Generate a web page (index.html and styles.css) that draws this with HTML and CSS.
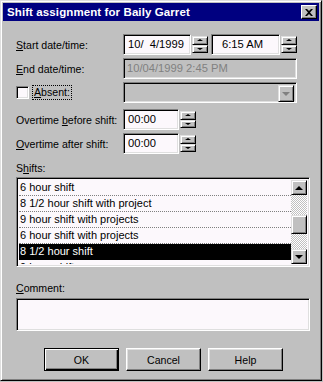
FILE: index.html
```html
<!DOCTYPE html>
<html>
<head>
<meta charset="utf-8">
<link rel="stylesheet" href="styles.css">
</head>
<body>
<div class="window">
  <div class="titlebar">
    <span class="title">Shift assignment for Baily Garret</span>
    <span class="closebtn"><svg width="8" height="7" viewBox="0 0 8 7"><path d="M0 0h2l2 2 2-2h2L5 3.5 8 7H6L4 5 2 7H0l3-3.5z" fill="#000"/></svg></span>
  </div>
  <div class="content">
    <div class="row r1">
      <span class="lbl"><u>S</u>tart date/time:</span>
      <div class="spinbox w-date">
        <div class="field">10/&nbsp;&nbsp;4/1999</div>
        <div class="spins"><span class="sb"><i class="up"></i></span><span class="sb"><i class="down"></i></span></div>
      </div>
      <div class="spinbox w-time">
        <div class="field ind">6:15 AM</div>
        <div class="spins"><span class="sb"><i class="up"></i></span><span class="sb"><i class="down"></i></span></div>
      </div>
    </div>
    <div class="row r2">
      <span class="lbl"><u>E</u>nd date/time:</span>
      <div class="field disabled w-full">10/04/1999 2:45 PM</div>
    </div>
    <div class="row r3">
      <span class="lbl chk"><span class="checkbox"></span><span class="focus"><u>A</u>bsent:</span></span>
      <div class="field disabled w-full combo"><span class="dropbtn"><i class="down gray"></i></span></div>
    </div>
    <div class="row r4">
      <span class="lbl">Overtime <u>b</u>efore shift:</span>
      <div class="spinbox w-ot">
        <div class="field">00:00</div>
        <div class="spins"><span class="sb"><i class="up"></i></span><span class="sb"><i class="down"></i></span></div>
      </div>
    </div>
    <div class="row r5">
      <span class="lbl"><u>O</u>vertime after shift:</span>
      <div class="spinbox w-ot">
        <div class="field">00:00</div>
        <div class="spins"><span class="sb"><i class="up"></i></span><span class="sb"><i class="down"></i></span></div>
      </div>
    </div>
    <div class="caption c-shifts">S<u>h</u>ifts:</div>
    <div class="listbox">
      <ul class="items">
        <li>6 hour shift</li>
        <li>8 1/2 hour shift with project</li>
        <li>9 hour shift with projects</li>
        <li>6 hour shift with projects</li>
        <li class="sel">8 1/2 hour shift</li>
        <li>9 hour shift</li>
      </ul>
      <div class="vscroll">
        <span class="sbtn"><i class="up big"></i></span>
        <span class="track t1"></span>
        <span class="thumb"></span>
        <span class="track t2"></span>
        <span class="sbtn"><i class="down big"></i></span>
      </div>
    </div>
    <div class="caption c-comment"><u>C</u>omment:</div>
    <div class="field comment"></div>
    <div class="buttons">
      <span class="btn default">OK</span>
      <span class="btn">Cancel</span>
      <span class="btn">Help</span>
    </div>
  </div>
</div>
</body>
</html>
```
FILE: styles.css
```css
* { box-sizing: border-box; }
html, body { margin: 0; padding: 0; background: #c0c0c0; }
body { width: 323px; height: 382px; overflow: hidden; font-family: "Liberation Sans", Arial, sans-serif; font-size: 10.6px; color: #000; }
u { text-decoration: underline; text-underline-offset: 1px; }

.window {
  width: 322px; height: 381px;
  background: #c0c0c0;
  border: 1px solid; border-color: #dfdfdf #000 #000 #dfdfdf;
  box-shadow: inset 1px 1px #fff, inset -1px -1px #808080;
  padding: 3px 3px 0 3px;
  position: relative;
}
.titlebar {
  height: 18px; background: #000080; color: #fff;
  display: flex; align-items: center; justify-content: space-between;
  padding: 0 2px 0 4px;
  margin: -1px 0 0 -1px;
  width: 316px;
}
.title { font-weight: bold; font-size: 11.5px; letter-spacing: 0.1px; }
.closebtn {
  width: 16px; height: 14px; background: #c0c0c0;
  border: 1px solid; border-color: #fff #000 #000 #fff;
  box-shadow: inset -1px -1px #808080;
  display: flex; align-items: center; justify-content: center;
}

.content { padding: 13px 0 0 12px; }
.row { display: flex; align-items: center; height: 21px; }
.r2 { margin-top: 3px; }
.r3 { margin-top: 3px; }
.r4 { margin-top: 6px; }
.r5 { margin-top: 3px; }
.lbl { width: 107px; flex: none; white-space: nowrap; }

.field {
  height: 21px; background: #fcf8fc;
  border: 1px solid; border-color: #808080 #fff #fff #808080;
  box-shadow: inset 1px 1px #000, inset -1px -1px #dfdfdf;
  padding: 3px 0 0 4px; white-space: nowrap;
  font-size: 11.2px;
}
.field.ind { padding-left: 10px; }
.field.disabled { background: #c0c0c0; color: #808080; padding-left: 3px; }
.w-full { width: 174px; }

.spinbox { display: flex; height: 21px; }
.spinbox .field { flex: 1; }
.w-date { width: 85px; }
.w-time { width: 86px; margin-left: 3px; }
.w-ot { width: 73px; }
.spins { width: 17px; display: flex; flex-direction: column; padding: 2px 0 2px 1px; gap: 0; }
.sb {
  flex: 1; background: #c0c0c0;
  border: 1px solid; border-color: #dfdfdf #000 #000 #dfdfdf;
  box-shadow: inset 1px 1px #fff, inset -1px -1px #808080;
  display: flex; align-items: center; justify-content: center;
}
i.up, i.down { display: block; width: 0; height: 0; border-left: 3px solid transparent; border-right: 3px solid transparent; }
i.up { border-bottom: 2px solid #000; }
i.down { border-top: 2px solid #000; }
i.big.up { border-left-width: 4px; border-right-width: 4px; border-bottom-width: 4px; }
i.big.down { border-left-width: 4px; border-right-width: 4px; border-top-width: 4px; }
i.gray.down { border-left-width: 4px; border-right-width: 4px; border-top: 4px solid #808080; }

.chk { display: flex; align-items: center; }
.checkbox {
  width: 13px; height: 13px; background: #fcf8fc;
  border: 1px solid; border-color: #808080 #fff #fff #808080;
  box-shadow: inset 1px 1px #000, inset -1px -1px #dfdfdf;
  margin-right: 4px;
}
.focus { outline: 1px dotted #000; outline-offset: 0; padding: 0 1px; line-height: 13px; }
.combo { display: flex; justify-content: flex-end; padding: 2px; }
.dropbtn {
  width: 16px; height: 17px; background: #c0c0c0;
  border: 1px solid; border-color: #dfdfdf #000 #000 #dfdfdf;
  box-shadow: inset 1px 1px #fff, inset -1px -1px #808080;
  display: flex; align-items: center; justify-content: center;
}

.caption { height: 13px; line-height: 13px; }
.c-shifts { margin-top: 8px; }
.listbox {
  margin-top: 2px; width: 294px; height: 90px; display: flex;
  border: 1px solid; border-color: #808080 #fff #fff #808080;
  box-shadow: inset 1px 1px #000, inset -1px -1px #dfdfdf;
  padding: 2px; background: #fcf8fc;
}
.items { list-style: none; margin: 0; padding: 0; flex: 1; overflow: hidden; font-size: 11px; }
.items li { height: 16px; line-height: 15px; padding-left: 1px; border-bottom: 1px dotted #808080; white-space: nowrap; }
.items li.sel { background: #000; color: #fff; border-bottom-color: #000; }
.vscroll { width: 16px; display: flex; flex-direction: column; }
.sbtn, .thumb {
  background: #c0c0c0; flex: none;
  border: 1px solid; border-color: #dfdfdf #000 #000 #dfdfdf;
  box-shadow: inset 1px 1px #fff, inset -1px -1px #808080;
  display: flex; align-items: center; justify-content: center;
}
.sbtn { height: 15px; }
.thumb { height: 19px; }
.track { flex: none; background-color: #c0c0c0; background-image: conic-gradient(#fff 25%, #c0c0c0 0 50%, #fff 0 75%, #c0c0c0 0); background-size: 2px 2px; }
.t1 { height: 20px; }
.t2 { flex: 1; }

.c-comment { margin-top: 15px; }
.comment { margin-top: 3px; width: 294px; height: 33px; }

.buttons { display: flex; gap: 7px; margin: 17px 0 0 28px; }
.btn {
  width: 75px; height: 23px; background: #c0c0c0;
  border: 1px solid; border-color: #fff #000 #000 #fff;
  box-shadow: inset -1px -1px #808080, inset 1px 1px #dfdfdf;
  display: flex; align-items: center; justify-content: center;
}
.btn.default { border: 1px solid #000; box-shadow: inset 1px 1px #fff, inset -1px -1px #000, inset -2px -2px #808080; }
```
